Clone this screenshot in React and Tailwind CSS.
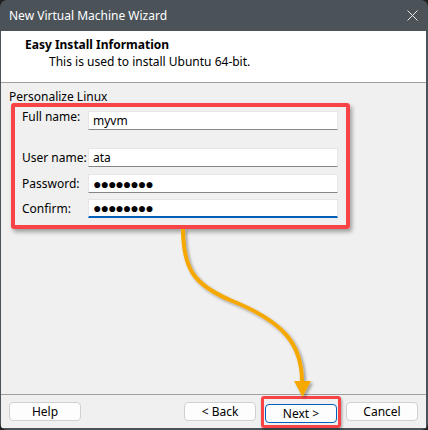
import React from 'react';

const font = { fontFamily: '"Noto Sans", "Open Sans", sans-serif' };

const Field = ({ label, value, secret, active, className = '' }) => (
    <div className={`flex items-center ${className}`}>
        <span className="w-[66px] text-[12px] text-black leading-none">{label}</span>
        <div
            className={`flex-1 h-[19px] bg-white border border-[#e6e6e6] flex items-center px-[4px] ${active ? 'border-b-2 border-b-[#005fb8]' : 'border-b-[#868686]'}`}
        >
            {secret ? (
                <span className="text-[14px] tracking-[-1px] leading-none text-black">{'\u25CF'.repeat(8)}</span>
            ) : (
                <span className="text-[12px] leading-none text-black">{value}</span>
            )}
        </div>
    </div>
);

const Btn = ({ children, primary }) => (
    <button
        className={`w-[72px] h-[19px] rounded-[4px] bg-[#fdfdfd] text-[12px] leading-none text-black border ${primary ? 'border-[#005fb8]' : 'border-[#d0d0d0]'}`}
    >
        {children}
    </button>
);

export default function App() {
    return (
        <div className="w-[428px] h-[430px] bg-[#202020] relative" style={font}>
            <div className="w-full h-full rounded-[7px] overflow-hidden bg-[#4b5359] flex flex-col">
                {/* title bar */}
                <div className="h-[31px] flex items-center justify-between pl-[9px] pr-[10px] text-white text-[12px]">
                    <span>New Virtual Machine Wizard</span>
                    <svg width="11" height="11" viewBox="0 0 11 11" stroke="#e8e8e8" strokeWidth="1" fill="none">
                        <path d="M0.5 0.5 L10.5 10.5 M10.5 0.5 L0.5 10.5" />
                    </svg>
                </div>

                <div className="flex-1 flex flex-col ml-[1px] mr-[2px] mb-[2px] bg-[#f0f0f0]">
                    {/* header */}
                    <div className="h-[52px] bg-white border-b border-[#a0a0a0] pt-[5px]">
                        <div className="pl-[24px] text-[12px] font-bold text-black leading-[18px]">Easy Install Information</div>
                        <div className="pl-[48px] text-[12px] text-black leading-[16px]">This is used to install Ubuntu 64-bit.</div>
                    </div>

                    {/* body */}
                    <div className="flex-1 pt-[8px]">
                        <div className="pl-[8px] text-[12px] leading-[12px] text-black">Personalize Linux</div>
                        <div className="ml-[10px] w-[339px] border-4 border-[#f84447] rounded-[3px] shadow-[2px_3px_4px_rgba(0,0,0,0.35)] pt-[4px] pl-[7px] pr-[8px] pb-[7px]">
                            <Field label="Full name:" value="myvm" className="items-start" />
                            <Field label="User name:" value="ata" className="mt-[18px]" />
                            <Field label="Password:" secret className="mt-[7px]" />
                            <Field label="Confirm:" secret active className="mt-[6px]" />
                        </div>
                    </div>

                    {/* footer */}
                    <div className="h-[34px] border-t border-[#a0a0a0] flex items-center px-[8px]">
                        <Btn>Help</Btn>
                        <div className="flex-1" />
                        <div className="flex items-center gap-[5px]">
                            <Btn>&lt; Back</Btn>
                            <div className="border-[3px] border-[#f84447] rounded-[3px] p-[1px] shadow-[1px_2px_3px_rgba(0,0,0,0.35)]">
                                <Btn primary>Next &gt;</Btn>
                            </div>
                            <Btn>Cancel</Btn>
                        </div>
                    </div>
                </div>
            </div>

            {/* annotation arrow */}
            <svg className="absolute left-0 top-0 pointer-events-none" width="428" height="430" viewBox="0 0 428 430">
                <defs>
                    <filter id="sh" x="-20%" y="-20%" width="140%" height="140%">
                        <feDropShadow dx="2" dy="2" stdDeviation="1.5" floodColor="#000" floodOpacity="0.35" />
                    </filter>
                </defs>
                <g filter="url(#sh)">
                    <path d="M183 229 C183 270 195 285 230 300 C285 322 302 345 302 382" stroke="#f5a800" strokeWidth="4" fill="none" />
                    <polygon points="294,381 311,381 302.5,397" fill="#f5a800" />
                </g>
            </svg>
        </div>
    );
}
